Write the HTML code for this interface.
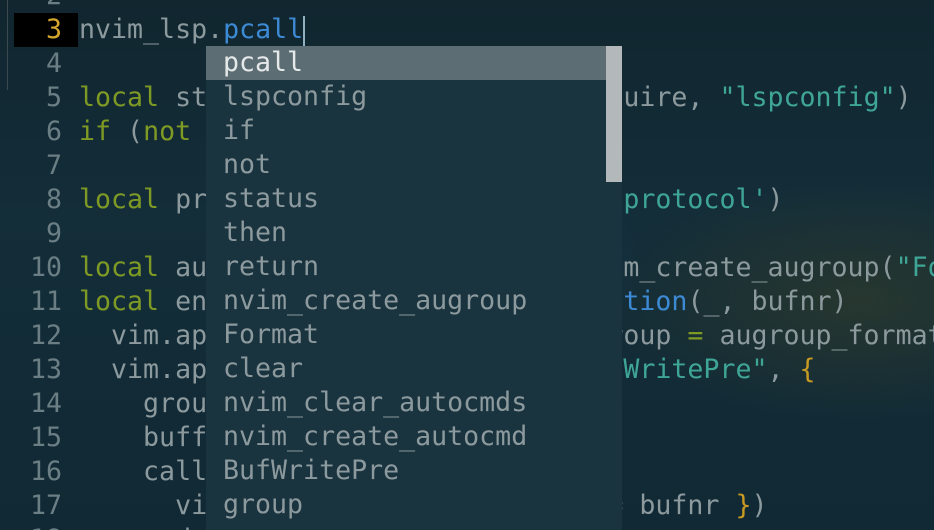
<!DOCTYPE html>
<html style="width:934px;height:530px;overflow:hidden"><head><meta charset="utf-8"><style>
html,body{margin:0;padding:0}
body{width:934px;height:530px;overflow:hidden;position:relative;
background:radial-gradient(ellipse 260px 120px at 860px 300px,#27372f 0%,rgba(0,0,0,0) 100%),radial-gradient(ellipse 120px 100px at 520px 260px,#1d4256 0%,rgba(0,0,0,0) 100%),linear-gradient(180deg,#11262f 0%,#132d39 40%,#112934 100%);
font-family:"DejaVu Sans Mono","Liberation Mono",monospace;font-size:26.6px;}
.l{position:absolute;left:0;height:34px;line-height:34px;white-space:pre;color:#8c9a9e}
.n{display:inline-block;width:62px;text-align:right;color:#6a7e84;margin-right:17px}
.cur{position:absolute;left:14px;top:13px;width:64px;height:34px;background:#000}
.k{color:#7f9a24}.s{color:#3fa597}.f{color:#3d8ad4}.b{color:#c89a22}
.pop{position:absolute;left:206px;top:46px;width:416px;height:484px;background:#19333f;overflow:hidden}
.pi{position:absolute;left:17px;height:34px;line-height:34px;color:#8c9a9e;white-space:pre}
.sel{position:absolute;left:0;top:0;width:400px;height:34px;background:#5d6d74}
.th{position:absolute;left:400px;top:0;width:16px;height:136px;background:#b3b9bb}
</style></head><body>
<div style="position:absolute;left:7px;top:0;width:1px;height:90px;background:#3a4a50"></div>
<div class="cur"></div>
<div class="l" style="top:-21px"><span class="n">2</span></div>
<div class="l" style="top:13px"><span class="n" style="color:#d4a72c">3</span>nvim_lsp.<span class="f">pcall</span><span style="display:inline-block;width:2px;height:30px;background:#8fb0c0;vertical-align:middle"></span></div>
<div class="l" style="top:47px"><span class="n">4</span></div>
<div class="l" style="top:81px"><span class="n">5</span><span class="k">local</span> status, nvim_lsp = pcall(req<span>uire, </span><span class="s">"lspconfig"</span>)</div>
<div class="l" style="top:115px"><span class="n">6</span><span class="k">if</span> (<span class="k">not</span> status) <span class="k">then</span> <span class="k">return</span> <span class="k">end</span></div>
<div class="l" style="top:149px"><span class="n">7</span></div>
<div class="l" style="top:183px"><span class="n">8</span><span class="k">local</span> protocol = require(<span class="s">'vim.lsp.protocol'</span>)</div>
<div class="l" style="top:217px"><span class="n">9</span></div>
<div class="l" style="top:251px"><span class="n">10</span><span class="k">local</span> augroup_format = vim.api.nvim_create_augroup(<span class="s">"Fo</span></div>
<div class="l" style="top:285px"><span class="n">11</span><span class="k">local</span> enable_format_on_save = <span class="f">function</span>(_, bufnr)</div>
<div class="l" style="top:319px"><span class="n">12</span>  vim.api.nvim_clear_autocmds({ group <span class="k">=</span> augroup_format</div>
<div class="l" style="top:353px"><span class="n">13</span>  vim.api.nvim_create_autocmd(<span class="s">"BufWritePre"</span>, <span class="b">{</span></div>
<div class="l" style="top:387px"><span class="n">14</span>    group = augroup_format,</div>
<div class="l" style="top:421px"><span class="n">15</span>    buffer = bufnr,</div>
<div class="l" style="top:455px"><span class="n">16</span>    callback = function()</div>
<div class="l" style="top:489px"><span class="n">17</span>      vim.lsp.buf.format({ bufnr = bufnr <span class="b">}</span>)</div>
<div class="l" style="top:523px;height:7px;overflow:hidden"><span class="n">18</span>    end</div>
<div class="pop">
<div class="sel"></div>
<div class="pi" style="top:0;color:#e6e9ea">pcall</div>
<div class="pi" style="top:34px">lspconfig</div>
<div class="pi" style="top:68px">if</div>
<div class="pi" style="top:102px">not</div>
<div class="pi" style="top:136px">status</div>
<div class="pi" style="top:170px">then</div>
<div class="pi" style="top:204px">return</div>
<div class="pi" style="top:238px">nvim_create_augroup</div>
<div class="pi" style="top:272px">Format</div>
<div class="pi" style="top:306px">clear</div>
<div class="pi" style="top:340px">nvim_clear_autocmds</div>
<div class="pi" style="top:374px">nvim_create_autocmd</div>
<div class="pi" style="top:408px">BufWritePre</div>
<div class="pi" style="top:442px">group</div>
<div class="th"></div>
</div>
</body></html>
